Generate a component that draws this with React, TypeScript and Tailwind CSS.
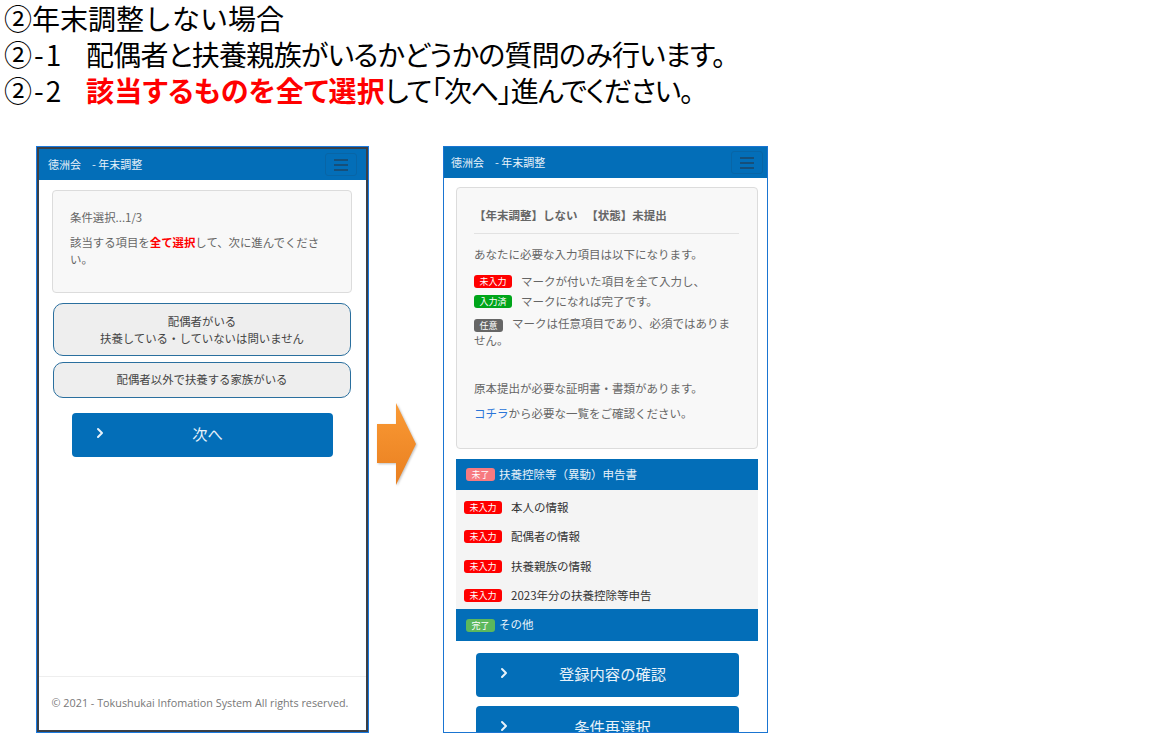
import { ChevronRight } from "lucide-react";

const jp = "font-['Noto_Sans_CJK_JP','Noto_Sans',sans-serif]";

function Badge({ label, color, wide = true }: { label: string; color: string; wide?: boolean }) {
  return (
    <span
      className={`inline-flex h-[13px] items-center justify-center rounded-[3px] align-[-1px] text-[9px] leading-none text-white ${wide ? "w-[38px]" : "w-[29px]"} ${color}`}
    >
      {label}
    </span>
  );
}

function NavBar({ pl, pr }: { pl: string; pr: string }) {
  return (
    <div className={`flex h-[31px] shrink-0 items-center justify-between bg-[#036eb8] ${pl} ${pr}`}>
      <span className="text-[11px] text-[#e8f2fa]">徳洲会　- 年末調整</span>
      <div className="flex h-[23px] w-[32px] flex-col items-center justify-center gap-[3px] rounded-[3px] border border-[#0865a6]">
        <div className="h-[2px] w-[14px] bg-[#164f7a]" />
        <div className="h-[2px] w-[14px] bg-[#164f7a]" />
        <div className="h-[2px] w-[14px] bg-[#164f7a]" />
      </div>
    </div>
  );
}

function PrimaryButton({ label, w }: { label: string; w: string }) {
  return (
    <div className={`relative flex h-[44px] shrink-0 items-center justify-center rounded-[4px] bg-[#036eb8] pb-[3px] pl-[11px] text-[15.3px] text-[#e8f2fa] ${w}`}>
      <ChevronRight size={16} strokeWidth={3} className="absolute left-[20px] top-[12px]" />
      {label}
    </div>
  );
}

function LeftPhone() {
  return (
    <div className="h-[587px] w-[333px] shrink-0 border border-[#1a7ae0] bg-white">
      <div className="flex h-full flex-col border-2 border-[#3a4048]">
        <NavBar pl="pl-[9px]" pr="pr-[9px]" />
        <div className="flex flex-1 flex-col pl-[13px] pr-[14px] pt-[10px]">
          <div className="h-[103px] rounded-[4px] border border-[#dcdcdc] bg-[#f8f8f8] pl-[17px] pr-[18px] pt-[18px] text-[11.4px] text-[#666666]">
            <p className="leading-[16px]">条件選択...1/3</p>
            <p className="mt-[9px] leading-[17px]">
              該当する項目を<span className="font-bold text-[#ff0000]">全て選択</span>して、次に進んでください。
            </p>
          </div>
          <div className="mx-[1px] mt-[10px] flex h-[53px] flex-col items-center justify-center rounded-[10px] border border-[#2a6f9e] bg-[#eeeeee] text-[11.4px] leading-[17px] text-[#444444]">
            <span>配偶者がいる</span>
            <span>扶養している・していないは問いません</span>
          </div>
          <div className="mx-[1px] mt-[6px] flex h-[36px] items-center justify-center rounded-[10px] border border-[#2a6f9e] bg-[#eeeeee] text-[11.4px] text-[#444444]">
            配偶者以外で扶養する家族がいる
          </div>
          <div className="mt-[15px] flex justify-center">
            <PrimaryButton label="次へ" w="w-[261px]" />
          </div>
        </div>
        <div className="flex h-[54px] shrink-0 items-center justify-center border-t border-[#eeeeee] pr-[5px] font-['Open_Sans',sans-serif] text-[10.8px] text-[#777777]">
          © 2021 - Tokushukai Infomation System All rights reserved.
        </div>
      </div>
    </div>
  );
}

const items = ["本人の情報", "配偶者の情報", "扶養親族の情報", "2023年分の扶養控除等申告"];

function RightPhone() {
  return (
    <div className="flex h-[587px] w-[325px] shrink-0 flex-col overflow-hidden border border-[#1a75d2] bg-white">
      <NavBar pl="pl-[7px]" pr="pr-[4px]" />
      <div className="flex flex-col items-center pl-[12px] pr-[9px] pt-[9px]">
        <div className="h-[262px] w-full rounded-[4px] border border-[#dcdcdc] bg-[#f8f8f8] pl-[17px] pr-[18px] pt-[19px] text-[11.5px] text-[#666666]">
          <p className="border-b border-[#e2e2e2] pb-[9px] font-bold leading-[17px]">
            【年末調整】しない　<span className="ml-[3px]">【状態】未提出</span>
          </p>
          <p className="mt-[12px] leading-[17px]">あなたに必要な入力項目は以下になります。</p>
          <p className="mt-[10px] flex items-center gap-[9px] leading-[17px]">
            <Badge label="未入力" color="bg-[#ff0000]" />
            マークが付いた項目を全て入力し、
          </p>
          <p className="mt-[3px] flex items-center gap-[9px] leading-[17px]">
            <Badge label="入力済" color="bg-[#00a51a]" />
            マークになれば完了です。
          </p>
          <p className="mt-[5px] leading-[17px]">
            <Badge label="任意" color="bg-[#666666]" wide={false} />
            <span className="ml-[9px]">マークは任意項目であり、必須ではありません。</span>
          </p>
          <p className="mt-[31px] leading-[17px]">原本提出が必要な証明書・書類があります。</p>
          <p className="mt-[8px] leading-[17px]">
            <span className="text-[#2a75d8]">コチラ</span>から必要な一覧をご確認ください。
          </p>
        </div>
        <div className="mt-[10px] flex h-[31px] w-full items-center gap-[4px] bg-[#036eb8] pl-[10px] text-[11.5px] text-[#e8f2fa]">
          <Badge label="未了" color="bg-[#f77a80]" wide={false} />
          扶養控除等（異動）申告書
        </div>
        <div className="flex h-[119px] w-full flex-col bg-[#f4f4f4] pl-[8px] pt-[2.5px]">
          {items.map((item) => (
            <div key={item} className="flex h-[29.5px] shrink-0 items-center gap-[9px] text-[11.5px] text-[#333333]">
              <Badge label="未入力" color="bg-[#ff0000]" />
              {item}
            </div>
          ))}
        </div>
        <div className="flex h-[32px] w-full items-center gap-[4px] bg-[#036eb8] pl-[10px] text-[11.5px] text-[#e8f2fa]">
          <Badge label="完了" color="bg-[#5cb85c]" wide={false} />
          その他
        </div>
        <div className="mt-[12px]">
          <PrimaryButton label="登録内容の確認" w="w-[263px]" />
        </div>
        <div className="mt-[9px]">
          <PrimaryButton label="条件再選択" w="w-[263px]" />
        </div>
      </div>
    </div>
  );
}

function Arrow() {
  return (
    <svg width="39" height="82" viewBox="0 0 39 82" className="shrink-0 drop-shadow-[1px_1px_1px_rgba(0,0,0,0.25)]">
      <defs>
        <linearGradient id="arrowFill" x1="0" y1="0" x2="0" y2="1">
          <stop offset="0" stopColor="#fa9a35" />
          <stop offset="1" stopColor="#e97f20" />
        </linearGradient>
      </defs>
      <path d="M0 21 H19 V0 L39 41 L19 82 V60 H0 Z" fill="url(#arrowFill)" />
    </svg>
  );
}

export default function App() {
  return (
    <div className={`h-[744px] w-[1149px] overflow-hidden bg-white ${jp}`}>
      <div className="pl-[4px] text-[28px] leading-[36px] text-black">
        <p>②年末調整しない場合</p>
        <p className="flex [font-feature-settings:'palt']">
          <span className="w-[82px] tracking-[2px]">②-1</span>
          <span className="tracking-[-0.72px]">配偶者と扶養親族がいるかどうかの質問のみ行います。</span>
        </p>
        <p className="flex [font-feature-settings:'palt']">
          <span className="w-[82px] tracking-[2px]">②-2</span>
          <span className="tracking-[-1.2px]">
            <span className="font-bold tracking-[0.2px] text-[#ff0000]">該当するものを全て選択</span>して「次へ」進んでください。
          </span>
        </p>
      </div>
      <div className="mt-[38px] flex items-start pl-[36px]">
        <LeftPhone />
        <div className="ml-[8px] mr-[27px] mt-[257px]">
          <Arrow />
        </div>
        <RightPhone />
      </div>
    </div>
  );
}
